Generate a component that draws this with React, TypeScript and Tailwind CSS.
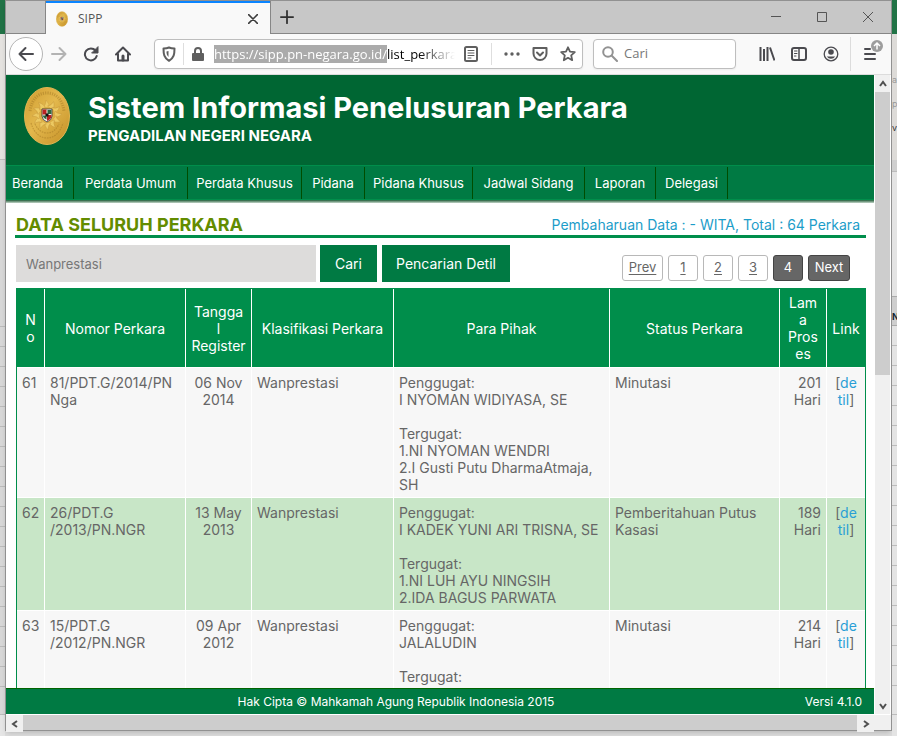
import { useEffect, useRef } from "react";
import type { ReactNode } from "react";

const ORIGIN = "https://sipp.pn-negara.go.id/";

const navItems = [
  { label: "Beranda", width: "w-[68px]" },
  { label: "Perdata Umum", width: "w-[114px]" },
  { label: "Perdata Khusus", width: "w-[114px]" },
  { label: "Pidana", width: "w-[63px]" },
  { label: "Pidana Khusus", width: "w-[108px]" },
  { label: "Jadwal Sidang", width: "w-[112px]" },
  { label: "Laporan", width: "w-[71px]" },
  { label: "Delegasi", width: "w-[72px]" },
];

const columns = [
  { label: "N\no", width: "w-[28px]" },
  { label: "Nomor Perkara", width: "w-[141px]" },
  { label: "Tangga\nl\nRegister", width: "w-[66px]" },
  { label: "Klasifikasi Perkara", width: "w-[142px]" },
  { label: "Para Pihak", width: "" },
  { label: "Status Perkara", width: "w-[170px]" },
  { label: "Lam\na\nPros\nes", width: "w-[47px]" },
  { label: "Link", width: "w-[38px]" },
];

const cases = [
  {
    no: 61,
    nomor: "81/PDT.G/2014/PN\nNga",
    tanggal: "06 Nov\n2014",
    pihak:
      "Penggugat:\nI NYOMAN WIDIYASA, SE\n\nTergugat:\n1.NI NYOMAN WENDRI\n2.I Gusti Putu DharmaAtmaja,\nSH",
    status: "Minutasi",
    lama: "201\nHari",
  },
  {
    no: 62,
    nomor: "26/PDT.G\n/2013/PN.NGR",
    tanggal: "13 May\n2013",
    pihak:
      "Penggugat:\nI KADEK YUNI ARI TRISNA, SE\n\nTergugat:\n1.NI LUH AYU NINGSIH\n2.IDA BAGUS PARWATA",
    status: "Pemberitahuan Putus\nKasasi",
    lama: "189\nHari",
  },
  {
    no: 63,
    nomor: "15/PDT.G\n/2012/PN.NGR",
    tanggal: "09 Apr\n2012",
    pihak: "Penggugat:\nJALALUDIN\n\nTergugat:\n\n",
    status: "Minutasi",
    lama: "214\nHari",
  },
];

function Emblem({ className }: { className: string }) {
  const rays = Array.from({ length: 12 }, (_, i) => i * 30);
  return (
    <svg viewBox="0 0 46 58" className={className} aria-hidden="true">
      <defs>
        <linearGradient id="gold" x1="0" y1="0" x2="1" y2="1">
          <stop offset="0" stopColor="#cf9c30" />
          <stop offset="0.45" stopColor="#e3b84d" />
          <stop offset="1" stopColor="#c48f26" />
        </linearGradient>
      </defs>
      <ellipse cx="23" cy="29" rx="22.5" ry="28.5" fill="url(#gold)" stroke="#e0b552" />
      <path d="M6 24C8 11 15 6 23 6s15 5 17 18" fill="none" stroke="#a67a24" strokeWidth="3" strokeDasharray="1.2 1.1" opacity="0.5" />
      <path d="M7 36c3 10 9 15 16 15s13-5 16-15M11 37c3 6 7 9 12 9s9-3 12-9" fill="none" stroke="#a67a24" strokeWidth="1.2" strokeDasharray="1.6 1" opacity="0.5" />
      {rays.map((a) => (
        <path key={a} d="M19 20q3-2 3-7q4 4 3 8z" fill="#ecc962" stroke="#c2933a" strokeWidth="0.4" transform={`rotate(${a} 23 28)`} />
      ))}
      <circle cx="23" cy="28" r="8" fill="#dcae45" />
      <path d="M18 22h10v7q0 4-5 6q-5-2-5-6z" fill="#f5f0e8" stroke="#333" strokeWidth="0.8" />
      <path d="M18.500 22.500h4v5h-4zM23 28h4.500v1q0 3-4.500 5z" fill="#bb2222" />
      <path d="M23.500 23h4v4h-4zM18.500 28.500h4v4q-3-1-4-4z" fill="#2f6840" />
      <path d="M21.500 26.500h3v3h-3z" fill="#111" />
    </svg>
  );
}

function Icon({ children, size = 16, color = "#4a4a4f" }: { children: ReactNode; size?: number; color?: string }) {
  return (
    <svg
      width={size}
      height={size}
      viewBox="0 0 16 16"
      fill="none"
      stroke={color}
      strokeWidth="2"
      strokeLinecap="round"
      strokeLinejoin="round"
      className="shrink-0"
      aria-hidden="true"
    >
      {children}
    </svg>
  );
}

function ToolButton({ label, children }: { label: string; children: ReactNode }) {
  return (
    <button type="button" aria-label={label} className="flex h-8 w-8 shrink-0 items-center justify-center">
      {children}
    </button>
  );
}

function TitleBar() {
  return (
    <div className="flex h-[33px] shrink-0 bg-[#c7c7c7]">
      <div className="w-10 border-r border-b border-[#868686]" />
      <div className="flex w-[224px] items-center border-t-2 border-[#0a84ff] bg-[#f9f9f9] pr-2 pl-2.5">
        <Emblem className="h-4 w-3" />
        <span className="ml-2.5 flex-1 font-['Open_Sans','Noto_Sans',sans-serif] text-xs text-[#555]">SIPP</span>
        <button type="button" aria-label="Tutup tab" className="p-1">
          <Icon size={10} color="#3c3c3c">
            <path d="M1 1l14 14M15 1L1 15" strokeWidth="2.500" />
          </Icon>
        </button>
      </div>
      <div className="flex flex-1 items-center border-b border-l border-[#868686]">
        <button type="button" aria-label="Tab baru" className="flex h-8 w-8 items-center justify-center">
          <Icon size={14} color="#2f2f2f">
            <path d="M8 1v14M1 8h14" />
          </Icon>
        </button>
        <div className="ml-auto flex">
          <button type="button" aria-label="Kecilkan" className="flex h-8 w-[46px] items-center justify-center">
            <svg width="10" height="10" stroke="#555" fill="none" aria-hidden="true">
              <path d="M0 4.500h10" />
            </svg>
          </button>
          <button type="button" aria-label="Besarkan" className="flex h-8 w-[46px] items-center justify-center">
            <svg width="10" height="10" stroke="#555" fill="none" aria-hidden="true">
              <path d="M.5.5h9v9h-9z" />
            </svg>
          </button>
          <button type="button" aria-label="Tutup" className="flex h-8 w-[46px] items-center justify-center">
            <svg width="10" height="10" stroke="#555" fill="none" aria-hidden="true">
              <path d="M0 0l10 10M10 0L0 10" />
            </svg>
          </button>
        </div>
      </div>
    </div>
  );
}

function AddressBar() {
  const field = useRef<HTMLInputElement>(null);
  useEffect(() => {
    const input = field.current;
    if (!input) return;
    input.focus();
    input.setSelectionRange(0, ORIGIN.length, "backward");
    input.scrollLeft = 0;
  }, []);
  return (
    <div className="ml-[15px] flex h-[30px] min-w-0 flex-1 items-center rounded-sm border border-[#bebebe] bg-white shadow-xs">
      <div className="flex w-7 shrink-0 justify-center">
        <Icon color="#5f5f5f">
          <path d="M8 1.500c2 .9 3.500 1 5.500 1C13.500 8 13 12 8 14.800C3 12 2.500 8 2.500 2.500c2 0 3.500-.1 5.500-1z" />
          <path d="M7.500 5v6c-1.500-1.500-2-3-2-5.500z" fill="#5f5f5f" stroke="none" />
        </Icon>
      </div>
      <div className="h-[22px] w-px bg-[#dedede]" />
      <div className="flex w-7 shrink-0 justify-center">
        <Icon color="#5f5f5f">
          <rect x="3" y="8" width="10" height="6" fill="#5f5f5f" />
          <path d="M5 7V5a3 3 0 0 1 6 0v2" />
        </Icon>
      </div>
      <input
        ref={field}
        aria-label="Alamat"
        defaultValue={ORIGIN + "list_perkara"}
        className="ml-0.5 h-5 min-w-0 flex-1 bg-transparent mask-r-from-85% font-['Open_Sans','Noto_Sans',sans-serif] text-[13px] text-black outline-none selection:bg-[#ababab] selection:text-white"
      />
      <button type="button" aria-label="Mode baca" className="flex w-8 shrink-0 justify-center">
        <Icon color="#5f5f5f">
          <rect x="2" y="1" width="12" height="14" rx="1.500" />
          <path d="M5 4.500h6M5 7h6M5 9.500h6M5 12h3" strokeWidth="1" />
        </Icon>
      </button>
      <div className="ml-1 h-[22px] w-px bg-[#dedede]" />
      <div className="flex pl-1.5">
        <button type="button" aria-label="Tindakan halaman" className="flex w-7 justify-center">
          <Icon color="#5f5f5f">
            <path d="M2 8h.01M8 8h.01M14 8h.01" strokeWidth="3.400" />
          </Icon>
        </button>
        <button type="button" aria-label="Simpan ke Pocket" className="flex w-7 justify-center">
          <Icon color="#5f5f5f">
            <path d="M1.500 2h13v5.500a6.500 6.500 0 0 1-13 0z" />
            <path d="M5 6.500l3 3l3-3" />
          </Icon>
        </button>
        <button type="button" aria-label="Markahi" className="flex w-7 justify-center">
          <Icon color="#5f5f5f">
            <path d="M8 1.300l2 4.400 4.800.5-3.600 3.200 1 4.800L8 11.800l-4.200 2.400 1-4.800L1.200 6.200 6 5.700z" strokeWidth="1.800" />
          </Icon>
        </button>
      </div>
    </div>
  );
}

function Toolbar() {
  return (
    <div className="flex h-[41px] shrink-0 items-center border-b border-[#dcdcdc] bg-[#f9f9f9] pl-[3px]">
      <button
        type="button"
        aria-label="Kembali"
        className="flex h-[34px] w-[34px] shrink-0 items-center justify-center rounded-full border border-[#b5b5b5] bg-white"
      >
        <Icon>
          <path d="M15 8H1.500M7.500 2l-6 6 6 6" />
        </Icon>
      </button>
      <ToolButton label="Maju">
        <Icon color="#b3b3b3">
          <path d="M1 8h13.500M8.500 2l6 6-6 6" />
        </Icon>
      </ToolButton>
      <ToolButton label="Muat ulang">
        <Icon>
          <path d="M12.500 4.500a6 6 0 1 0 1.200 5.500" />
          <path d="M15 1v6H9z" fill="#4a4a4f" strokeWidth="1" />
        </Icon>
      </ToolButton>
      <ToolButton label="Beranda peramban">
        <Icon>
          <path d="M1 8.500l7-7 7 7M3 8v6.500h10V8" />
          <path d="M8 14v-4" strokeWidth="3" />
        </Icon>
      </ToolButton>
      <AddressBar />
      <label className="ml-2.5 flex h-[30px] w-[143px] shrink-0 items-center rounded-sm border border-[#bebebe] bg-white pl-2 shadow-xs">
        <Icon color="#929292">
          <circle cx="6" cy="6" r="4.800" />
          <path d="M9.800 9.800l5.200 5.200" />
        </Icon>
        <input
          aria-label="Cari di web"
          placeholder="Cari"
          className="ml-1.5 w-24 bg-transparent font-['Open_Sans','Noto_Sans',sans-serif] text-[13px] outline-none placeholder:text-[#777]"
        />
      </label>
      <div className="ml-[15px] flex">
        <ToolButton label="Pustaka">
          <Icon>
            <path d="M1.500 1v14M5 3v12M8.500 1v14M11 1.500l4.500 13" strokeLinecap="butt" />
          </Icon>
        </ToolButton>
        <ToolButton label="Bilah samping">
          <Icon>
            <rect x="1" y="2" width="14" height="12" rx="2" />
            <path d="M8 2v12" strokeWidth="1.500" />
            <path d="M3.500 5h2.500M3.500 7.500h2.500M3.500 10h1.500" strokeWidth="1" />
          </Icon>
        </ToolButton>
        <ToolButton label="Akun">
          <Icon>
            <circle cx="8" cy="8" r="6.800" strokeWidth="1.300" />
            <circle cx="8" cy="6" r="2.800" fill="#4a4a4f" stroke="none" />
            <path d="M3.800 10.500h8.400a5 5 0 0 1-8.400 0z" fill="#4a4a4f" stroke="none" />
          </Icon>
        </ToolButton>
      </div>
      <div className="ml-[3px] h-[34px] w-px bg-[#dcdcdc]" />
      <button type="button" aria-label="Menu" className="flex h-8 w-10 shrink-0 items-center justify-center pb-1 pl-1">
        <svg width="20" height="24" viewBox="0 0 20 24" fill="none" aria-hidden="true">
          <path d="M2 9h5M2 14h10M2 19h10" stroke="#4a4a4f" strokeWidth="2" strokeLinecap="round" />
          <circle cx="14" cy="6" r="6" fill="#9d9d9d" />
          <path d="M14 9.500v-6M11 6l3-3 3 3" stroke="#fff" strokeWidth="1.500" />
        </svg>
      </button>
    </div>
  );
}

function SiteHeader() {
  return (
    <header className="shrink-0">
      <div className="flex h-[90px] bg-[#006633] pt-3 pl-[18px] text-white">
        <Emblem className="h-[58px] w-[46px]" />
        <div className="ml-[18px] pt-0.5">
          <h1 className="text-[29px] leading-[38px] font-bold whitespace-nowrap">
            Sistem Informasi Penelusuran Perkara
          </h1>
          <h2 className="text-[15px] leading-[18px] font-bold">PENGADILAN NEGERI NEGARA</h2>
        </div>
      </div>
      <nav className="flex h-[35px] border-y border-[#008e4b] bg-[#007a43] pt-px text-[13px] text-white">
        {navItems.map((item) => (
          <a
            key={item.label}
            href="#"
            className={`${item.width} flex shrink-0 items-center justify-center border-r border-[#004d00] pt-px whitespace-nowrap first:pr-1`}
          >
            {item.label}
          </a>
        ))}
      </nav>
      <div className="h-[3px] bg-linear-to-b from-[#1b5e3b] to-[#c3d5ca]" />
    </header>
  );
}

function Pagination() {
  const box = "flex h-[26px] items-center justify-center rounded-[3px] border";
  const plain = "border-[#b8b8b8] bg-white text-[#666] underline underline-offset-2";
  const dark = "border-[#444] bg-[#666] text-white";
  return (
    <div className="mt-2.5 mr-4 ml-auto flex gap-[5px] text-[13px]">
      <a href="#" className={`${box} ${plain} w-[41px]`}>Prev</a>
      <a href="#" className={`${box} ${plain} w-[30px]`}>1</a>
      <a href="#" className={`${box} ${plain} w-[30px]`}>2</a>
      <a href="#" className={`${box} ${plain} w-[30px]`}>3</a>
      <span className={`${box} ${dark} w-[30px]`}>4</span>
      <span className={`${box} ${dark} w-[42px]`}>Next</span>
    </div>
  );
}

function CaseTable() {
  const cell = "border-t border-r border-white px-[5px] pt-1.5 pb-1 align-top last:border-r-0";
  return (
    <table className="w-full table-fixed border-separate border-spacing-0 border border-[#008e4b] text-sm leading-[17px] text-[#666]">
      <thead>
        <tr className="bg-[#008e4b] text-white">
          {columns.map((c) => (
            <th
              key={c.label}
              className={`${c.width} border-r border-white px-0.5 py-[5px] font-normal whitespace-pre-line last:border-r-0`}
            >
              {c.label}
            </th>
          ))}
        </tr>
      </thead>
      <tbody>
        {cases.map((c) => (
          <tr key={c.no} className="bg-[#f7f7f7] whitespace-pre-line even:bg-[#c8e6c7]">
            <td className={cell}>{c.no}</td>
            <td className={cell}>{c.nomor}</td>
            <td className={`${cell} text-center`}>{c.tanggal}</td>
            <td className={cell}>Wanprestasi</td>
            <td className={cell}>{c.pihak}</td>
            <td className={cell}>{c.status}</td>
            <td className={`${cell} text-right`}>{c.lama}</td>
            <td className={`${cell} text-center`}>
              [<a href="#" className="text-[#2a9fd6]">de<br />til</a>]
            </td>
          </tr>
        ))}
      </tbody>
    </table>
  );
}

function SitePage() {
  return (
    <div className="flex min-w-0 flex-1 flex-col overflow-hidden bg-white">
      <SiteHeader />
      <main className="min-h-0 flex-1 overflow-hidden pr-2 pl-2.5">
        <div className="-ml-px flex h-[35px] items-end justify-between border-b-3 border-[#008e4b] pr-1.5 pl-px whitespace-nowrap">
          <h3 className="text-lg leading-5 font-bold text-[#638c00]">DATA SELURUH PERKARA</h3>
          <p className="text-sm leading-5 text-[#1c9dc9]">Pembaharuan Data : - WITA, Total : 64 Perkara</p>
        </div>
        <form className="flex h-[50px] pt-[7px]" onSubmit={(e) => e.preventDefault()}>
          <input
            aria-label="Kata kunci"
            placeholder="Wanprestasi"
            className="h-[37px] w-[300px] bg-[#dddcdb] px-2.5 text-[13px] outline-none placeholder:text-[#777]"
          />
          <button type="submit" className="ml-1 h-[37px] w-[57px] bg-[#007a43] text-sm text-white">
            Cari
          </button>
          <button type="button" className="ml-[5px] h-[37px] w-[128px] bg-[#007a43] text-sm text-white">
            Pencarian Detil
          </button>
          <Pagination />
        </form>
        <CaseTable />
      </main>
      <footer className="grid h-[26px] shrink-0 grid-cols-[1fr_auto_1fr] items-center border-t border-[#006400] bg-[#007a43] pr-3 text-xs text-white">
        <span className="col-start-2 pr-[76px]">Hak Cipta © Mahkamah Agung Republik Indonesia 2015</span>
        <span className="text-right">Versi 4.1.0</span>
      </footer>
    </div>
  );
}

function ArrowButton({ label, d }: { label: string; d: string }) {
  return (
    <button type="button" aria-label={label} className="flex h-[17px] w-[17px] max-w-full shrink-0 items-center justify-center bg-[#f0f0f0]">
      <svg width="8" height="8" viewBox="0 0 8 8" fill="none" stroke="#505050" strokeWidth="2" aria-hidden="true">
        <path d={d} />
      </svg>
    </button>
  );
}

function LeftDesktop() {
  return (
    <div className="flex w-[5px] shrink-0 flex-col bg-[#d8d8d8]">
      <div className="h-[34px] bg-[#217346]" />
      <div className="h-[126px] border-b border-[#bdbdbd] bg-[#e5e3e0]" />
      <div className="h-[147px]" />
      {Array.from({ length: 19 }, (_, i) => (
        <div key={i} className="h-5 border-b border-[#bcbcbc]" />
      ))}
      <div className="h-7 border-b border-[#bcbcbc]" />
      <div className="flex-1 bg-[#e6e6e6]" />
    </div>
  );
}

function RightDesktop() {
  return (
    <div className="flex w-[5px] shrink-0 flex-col overflow-hidden bg-[#e4e4e4] text-[9px] leading-6 text-[#999]">
      <div className="h-[34px] bg-[#217346]" />
      <div className="h-[126px] bg-[#dddbd8] pt-[34px]">
        <div>a</div>
        <div>p</div>
        <div className="whitespace-nowrap text-[#333]">va</div>
      </div>
      <div className="h-3 border-b border-[#bcbcbc] bg-[#cfcfcf]" />
      <div className="h-[124px]" />
      <div className="h-[30px] border-y border-[#aaa] bg-[#cecece] pt-2 font-bold text-[#123]">N</div>
      {Array.from({ length: 18 }, (_, i) => (
        <div key={i} className="h-5 border-b border-[#bcbcbc]" />
      ))}
      <div className="h-[29px] border-b border-[#bcbcbc]" />
      <div className="flex-1" />
    </div>
  );
}

export default function App() {
  return (
    <div className="flex h-screen overflow-hidden bg-[#dcdcdc] font-[Inter,'Open_Sans',sans-serif]">
      <LeftDesktop />
      <div className="flex min-w-0 flex-1 flex-col bg-[#dedede] pb-[5px]">
        <div className="flex min-h-0 flex-1 flex-col border border-[#919191] bg-white shadow-md">
          <TitleBar />
          <Toolbar />
          <div className="flex min-h-0 flex-1">
            <SitePage />
            <div className="flex w-[17px] flex-col border-r border-l border-white bg-[#f0f0f0]">
              <ArrowButton label="Gulir ke atas" d="M1 6l3-4 3 4" />
              <div className="h-[283px] bg-[#cdcdcd]" />
              <div className="flex-1" />
              <ArrowButton label="Gulir ke bawah" d="M1 2l3 4 3-4" />
            </div>
          </div>
          <div className="flex h-4 shrink-0 border-t border-white bg-[#f0f0f0] pr-[17px]">
            <ArrowButton label="Gulir ke kiri" d="M6 1L2 4l4 3" />
            <div className="flex-1 bg-[#cdcdcd]" />
            <ArrowButton label="Gulir ke kanan" d="M2 1l4 3-4 3" />
          </div>
        </div>
      </div>
      <RightDesktop />
    </div>
  );
}
